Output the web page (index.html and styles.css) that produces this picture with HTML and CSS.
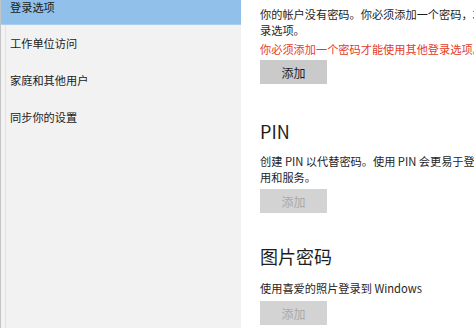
FILE: index.html
```html
<!DOCTYPE html>
<html lang="zh-CN">
<head>
  <meta charset="UTF-8" />
  <title>帐户 - 登录选项</title>
  <link rel="stylesheet" href="styles.css">
</head>
<body>
  <div class="window">
    <nav class="sidebar">
      <div class="nav-item active">登录选项</div>
      <div class="nav-item">工作单位访问</div>
      <div class="nav-item">家庭和其他用户</div>
      <div class="nav-item">同步你的设置</div>
    </nav>

    <main class="content">
      <section class="block first">
        <p class="desc">你的帐户没有密码。你必须添加一个密码，才能使用其他登录选项。</p>
        <p class="warn">你必须添加一个密码才能使用其他登录选项。</p>
        <button class="btn">添加</button>
      </section>

      <section class="block">
        <h2>PIN</h2>
        <p class="desc wide">创建 PIN 以代替密码。使用 PIN 会更易于登录 Windows、应用和服务。</p>
        <button class="btn" disabled>添加</button>
      </section>

      <section class="block last">
        <h2>图片密码</h2>
        <p class="desc">使用喜爱的照片登录到 Windows</p>
        <button class="btn" disabled>添加</button>
      </section>
    </main>
  </div>
</body>
</html>
```

FILE: styles.css
```css
html, body {
  margin: 0;
  padding: 0;
  height: 100%;
  overflow: hidden;
}
body {
  background: #fff;
  color: #1e1e1e;
  font-family: "Noto Sans CJK SC", "Noto Sans", sans-serif;
  font-size: 11.2px;
}
.window {
  display: flex;
  height: 328px;
}
.sidebar {
  width: 240px;
  flex-shrink: 0;
  background: #f2f2f2;
  border-left: 1px solid #c4c4c4;
  box-shadow: inset 4px 0 0 #f2f2f2, inset 5px 0 0 #e2e2e2;
  margin-top: -11px;
  height: 340px;
}
.nav-item {
  height: 37px;
  line-height: 37px;
  padding-left: 9px;
  font-size: 11.2px;
  color: #1a1a1a;
}
.nav-item.active {
  background: #91c1ea;
  border-bottom: 1px solid #a9cdee;
  height: 35px;
  line-height: 36px;
}
.content {
  flex: 1;
  padding: 6px 0 0 19px;
  white-space: nowrap;
  overflow: hidden;
}
.block {
  margin-top: 35px;
}
.block.first {
  margin-top: 0;
}
.block.last {
  margin-top: 31px;
}
.block h2 {
  margin: 0 0 10px;
  font-size: 18px;
  font-weight: normal;
  line-height: 24px;
}
.block.last h2 {
  margin-bottom: 12px;
}
.desc {
  margin: 0;
  line-height: 16px;
  white-space: normal;
  width: 296px;
}
.desc.wide {
  width: 305px;
}
.warn {
  margin: 3px 0 0;
  line-height: 16px;
  color: #e53b26;
}
.btn {
  display: block;
  width: 67px;
  height: 24px;
  margin-top: 3px;
  border: none;
  background: #cacaca;
  color: #1e1e1e;
  font-family: inherit;
  font-size: 12px;
  padding: 0;
}
.btn:disabled {
  background: #d3d3d3;
  color: #a9a9a9;
}
.block + .block .btn {
  margin-top: 4px;
}
.block.last .btn {
  margin-top: 5px;
}
```
